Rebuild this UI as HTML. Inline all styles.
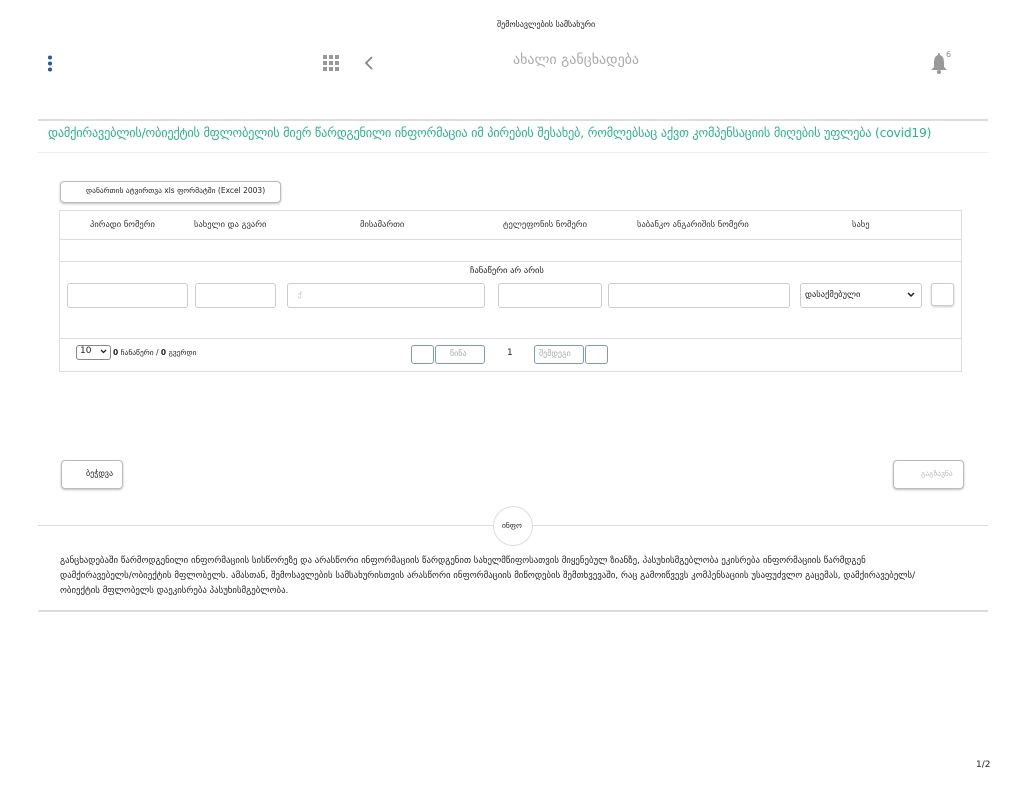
<!DOCTYPE html>
<html><head><meta charset="utf-8"><style>
body{margin:0;width:1024px;height:791px;background:#fff;font-family:"DejaVu Sans","Liberation Sans",sans-serif;color:#222;position:relative;overflow:hidden}
.a{position:absolute;white-space:nowrap}
.box{position:absolute;border:1px solid #ccc;border-radius:3px;background:#fff}
.btn{position:absolute;border:1px solid #bbb;border-radius:4px;box-shadow:0 1px 2px rgba(0,0,0,.25);background:#fff}
.th{position:absolute;top:220px;font-size:8.5px;color:#333;white-space:nowrap}
</style></head><body>
<div class="a" style="left:497px;top:20px;font-size:8px">შემოსავლების სამსახური</div>
<svg class="a" style="left:46px;top:55px" width="8" height="18"><circle cx="4" cy="2.5" r="2" fill="#2a5b8f"/><circle cx="4" cy="8.5" r="2" fill="#2a5b8f"/><circle cx="4" cy="14.5" r="2" fill="#2a5b8f"/></svg>
<svg class="a" style="left:323px;top:55px" width="16" height="16" fill="#999"><rect x="0" y="0" width="4" height="4"/><rect x="6" y="0" width="4" height="4"/><rect x="12" y="0" width="4" height="4"/><rect x="0" y="6" width="4" height="4"/><rect x="6" y="6" width="4" height="4"/><rect x="12" y="6" width="4" height="4"/><rect x="0" y="12" width="4" height="4"/><rect x="6" y="12" width="4" height="4"/><rect x="12" y="12" width="4" height="4"/></svg>
<svg class="a" style="left:364px;top:56px" width="10" height="14"><path d="M8 1L2 7l6 6" stroke="#888" stroke-width="1.8" fill="none"/></svg>
<div class="a" style="left:513px;top:52px;font-size:14px;color:#aaa">ახალი განცხადება</div>
<svg class="a" style="left:930px;top:52px" width="18" height="22"><path d="M9 1c1 0 1 1 1 2 3 1 4 4 4 8v4l3 3H1l3-3v-4c0-4 1-7 4-8 0-1 0-2 1-2z" fill="#999"/><circle cx="9" cy="20" r="2" fill="#999"/></svg>
<div class="a" style="left:946px;top:50px;font-size:8px;color:#888">6</div>
<div class="a" style="left:38px;top:119px;width:950px;height:2px;background:#ddd"></div>
<div class="a" style="left:48px;top:126px;font-size:12.3px;color:#2bb38a;letter-spacing:-0.2px">დამქირავებლის/ობიექტის მფლობელის მიერ წარდგენილი ინფორმაცია იმ პირების შესახებ, რომლებსაც აქვთ კომპენსაციის მიღების უფლება (covid19)</div>
<div class="a" style="left:38px;top:152px;width:950px;height:1px;background:#eee"></div>
<div class="btn" style="left:60px;top:181px;width:219px;height:20px"></div>
<div class="a" style="left:86px;top:186px;font-size:7.5px">დანართის ატვირთვა xls ფორმატში (Excel 2003)</div>
<div class="a" style="left:59px;top:210px;width:901px;height:160px;border:1px solid #ddd"></div>
<div class="th" style="left:90px">პირადი ნომერი</div>
<div class="th" style="left:194px">სახელი და გვარი</div>
<div class="th" style="left:360px">მისამართი</div>
<div class="th" style="left:503px">ტელეფონის ნომერი</div>
<div class="th" style="left:637px">საბანკო ანგარიშის ნომერი</div>
<div class="th" style="left:852px">სახე</div>
<div class="a" style="left:60px;top:239px;width:901px;height:1px;background:#ddd"></div>
<div class="a" style="left:60px;top:261px;width:901px;height:1px;background:#ddd"></div>
<div class="a" style="left:470px;top:266px;font-size:8.5px">ჩანაწერი არ არის</div>
<div class="box" style="left:67px;top:283px;width:119px;height:23px"></div>
<div class="box" style="left:195px;top:283px;width:79px;height:23px"></div>
<div class="box" style="left:287px;top:283px;width:196px;height:23px"></div>
<div class="a" style="left:298px;top:291px;font-size:7px;color:#bbb">ქ</div>
<div class="box" style="left:498px;top:283px;width:102px;height:23px"></div>
<div class="box" style="left:608px;top:283px;width:180px;height:23px"></div>
<div class="box" style="left:800px;top:283px;width:120px;height:23px"></div>
<div class="a" style="left:805px;top:290px;font-size:8.5px">დასაქმებული</div>
<svg class="a" style="left:907px;top:292px" width="8" height="6"><path d="M1 1l3 3 3-3" stroke="#222" stroke-width="1.5" fill="none"/></svg>
<div class="box" style="left:931px;top:283px;width:21px;height:21px;box-shadow:0 1px 2px rgba(0,0,0,.2)"></div>
<div class="a" style="left:60px;top:338px;width:901px;height:1px;background:#ddd"></div>
<div class="box" style="left:76px;top:345px;width:33px;height:13px;border-color:#888"></div>
<div class="a" style="left:80px;top:346px;font-size:9px">10</div>
<svg class="a" style="left:100px;top:349px" width="7" height="5"><path d="M1 1l2.5 2.5L6 1" stroke="#222" stroke-width="1.3" fill="none"/></svg>
<div class="a" style="left:113px;top:348px;font-size:7.5px"><b>0</b> ჩანაწერი / <b>0</b> გვერდი</div>
<div class="box" style="left:411px;top:345px;width:21px;height:17px;border-color:#7a9cc4"></div>
<div class="box" style="left:435px;top:345px;width:48px;height:17px;border-color:#7a9cc4"></div>
<div class="a" style="left:450px;top:349px;font-size:8px;color:#aaa">წინა</div>
<div class="a" style="left:507px;top:348px;font-size:9px">1</div>
<div class="box" style="left:534px;top:345px;width:48px;height:17px;border-color:#7a9cc4"></div>
<div class="a" style="left:539px;top:349px;font-size:8px;color:#aaa">შემდეგი</div>
<div class="box" style="left:585px;top:345px;width:21px;height:17px;border-color:#7a9cc4"></div>
<div class="btn" style="left:61px;top:460px;width:60px;height:27px"></div>
<div class="a" style="left:86px;top:469px;font-size:8px">ბეჭდვა</div>
<div class="btn" style="left:893px;top:460px;width:69px;height:27px"></div>
<div class="a" style="left:921px;top:469px;font-size:7.5px;color:#bbb">გაგზავნა</div>
<div class="a" style="left:38px;top:525px;width:950px;height:1px;background:#ddd"></div>
<div class="a" style="left:493px;top:506px;width:38px;height:38px;border:1px solid #ddd;border-radius:50%;background:#fff"></div>
<div class="a" style="left:502px;top:521px;font-size:7.5px">ინფო</div>
<div class="a" style="left:60px;top:554px;font-size:8.8px;line-height:15px">განცხადებაში წარმოდგენილი ინფორმაციის სისწორეზე და არასწორი ინფორმაციის წარდგენით სახელმწიფოსათვის მიყენებულ ზიანზე, პასუხისმგებლობა ეკისრება ინფორმაციის წარმდგენ<br>დამქირავებელს/ობიექტის მფლობელს. ამასთან, შემოსავლების სამსახურისთვის არასწორი ინფორმაციის მიწოდების შემთხვევაში, რაც გამოიწვევს კომპენსაციის უსაფუძვლო გაცემას, დამქირავებელს/<br>ობიექტის მფლობელს დაეკისრება პასუხისმგებლობა.</div>
<div class="a" style="left:38px;top:610px;width:950px;height:2px;background:#ddd"></div>
<div class="a" style="left:976px;top:760px;font-size:9px">1/2</div>
</body></html>
